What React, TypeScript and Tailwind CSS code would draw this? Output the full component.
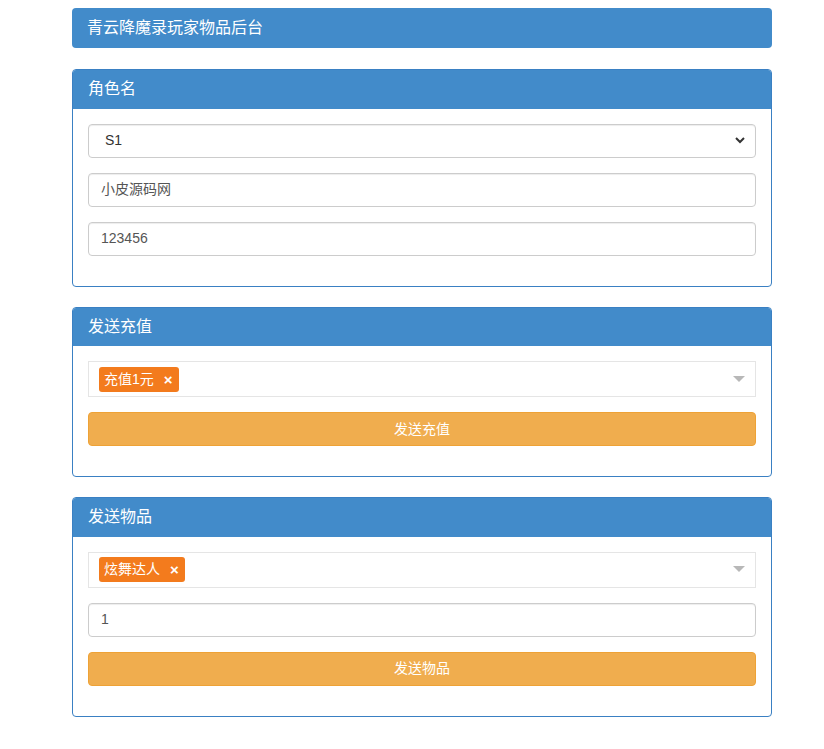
import React from "react";

const font = { fontFamily: '"Liberation Sans", "Noto Sans CJK SC", sans-serif' };

function Panel({ title, children }: { title: string; children: React.ReactNode }) {
  return (
    <div className="border border-[#3a80c3] rounded-[4px] bg-white mb-[20px] overflow-hidden">
      <div className="h-[38.6px] bg-[#428bca] px-[15px] flex items-center text-white text-[16px]">{title}</div>
      <div className="p-[15px] flex flex-col gap-[15px] pb-[30px]">{children}</div>
    </div>
  );
}

function Input({ value }: { value: string }) {
  return (
    <div className="h-[34px] border border-[#ccc] rounded-[4px] px-[12px] flex items-center text-[14px] text-[#555] shadow-[inset_0_1px_1px_rgba(0,0,0,0.075)]">
      {value}
    </div>
  );
}

function Select2({ tag }: { tag: string }) {
  return (
    <div className="h-[36px] border border-[#e5e5e5] flex items-center pl-[10px] pr-[10px] justify-between">
      <div className="h-[25px] bg-[#f37b1d] rounded-[3px] flex items-center pl-[5px] pr-[6px] text-white text-[14px]">
        <span>{tag}</span>
        <span className="ml-[10px] text-[15px] font-bold leading-none">×</span>
      </div>
      <svg width="12" height="7" viewBox="0 0 12 7">
        <path d="M0 0 L12 0 L6 6 Z" fill="#b8b8b8" />
      </svg>
    </div>
  );
}

function Button({ label }: { label: string }) {
  return (
    <div className="h-[34px] bg-[#f0ad4e] border border-[#eea236] rounded-[4px] flex items-center justify-center text-white text-[14px]">
      {label}
    </div>
  );
}

export default function App() {
  return (
    <div className="min-h-[749px] bg-white" style={font}>
      <div className="w-[700px] ml-[72px] pt-[8px]">
        <div className="h-[40px] bg-[#428bca] rounded-[4px] px-[15px] flex items-center text-white text-[16px] mb-[21px]">
          青云降魔录玩家物品后台
        </div>
        <Panel title="角色名">
          <div className="h-[34px] border border-[#ccc] rounded-[4px] pl-[16px] pr-[10px] flex items-center justify-between text-[14px] text-[#333] shadow-[inset_0_1px_1px_rgba(0,0,0,0.075)]">
            <span>S1</span>
            <svg width="10" height="7" viewBox="0 0 10 7">
              <path d="M1 1 L5 5 L9 1" stroke="#333" strokeWidth="2" fill="none" />
            </svg>
          </div>
          <Input value="小皮源码网" />
          <Input value="123456" />
        </Panel>
        <Panel title="发送充值">
          <Select2 tag="充值1元" />
          <Button label="发送充值" />
        </Panel>
        <Panel title="发送物品">
          <Select2 tag="炫舞达人" />
          <Input value="1" />
          <Button label="发送物品" />
        </Panel>
      </div>
    </div>
  );
}
